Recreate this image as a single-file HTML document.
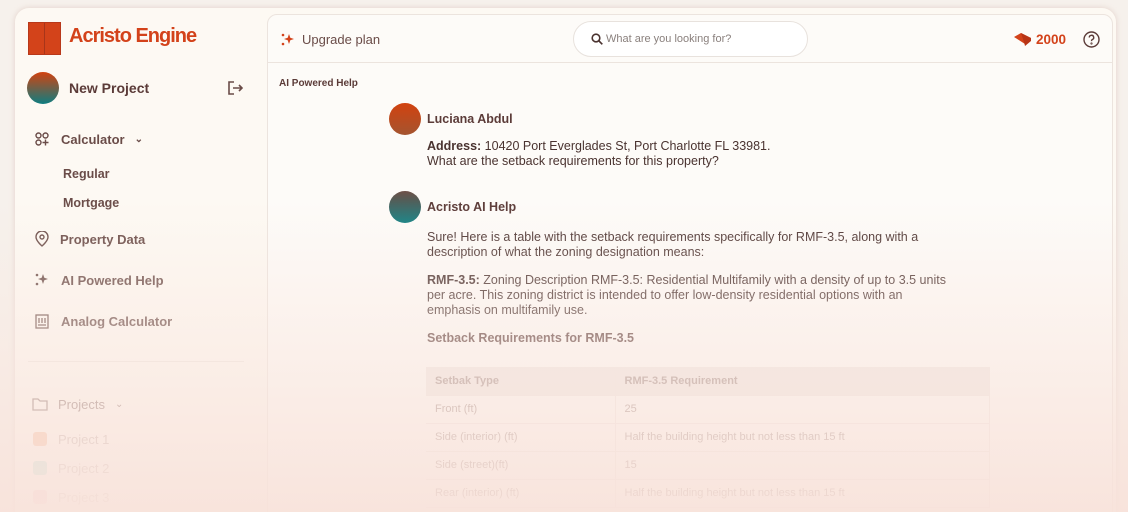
<!DOCTYPE html><html><head><style>
*{margin:0;padding:0;box-sizing:border-box}
html,body{width:1128px;height:512px;overflow:hidden}
body{background:#f6f1ec;font-family:"Liberation Sans",sans-serif;color:#5b3b38;position:relative}
.card{position:absolute;left:15px;top:8px;width:1101px;height:520px;background:#fdf9f3;border-radius:14px;box-shadow:0 0 6px rgba(200,160,150,.4)}
.side{position:absolute;left:0;top:0;width:252px;height:100%}
.main{position:absolute;left:252px;top:6px;width:846px;height:520px;background:#fdfbf8;border:1px solid #ece4de;border-radius:10px}
.abs{position:absolute}
.nav{position:absolute;font-size:13px;font-weight:bold;color:#6a4c48;display:flex;align-items:center}
.fade{position:absolute;left:0;top:0;width:1128px;height:512px;pointer-events:none;background:linear-gradient(to bottom,rgba(250,232,224,0) 0px,rgba(250,232,224,0) 200px,rgba(249,230,222,.55) 360px,rgba(248,226,218,.92) 512px)}
td{height:28px;border-bottom:1px solid #efe6e2;border-right:1px solid #efe6e2;padding-left:9px;font-size:11px;color:#a08a85}
table{border-collapse:collapse;position:absolute;left:426px;top:367px;width:564px}
.msg{position:absolute;left:427px;font-size:12.5px;line-height:15px;color:#4a3330}
</style></head><body>
<div class="card">
<div class="side">
 <div class="abs" style="left:13px;top:14px;width:33px;height:33px;background:#d3431a;border:1px solid #b8381a">
  <div class="abs" style="left:15px;top:0;width:1px;height:31px;background:#a8351a"></div></div>
 <div class="abs" style="left:54px;top:17px;font-size:20px;font-weight:bold;color:#d3421a;letter-spacing:-1px">Acristo Engine</div>
 <div class="abs" style="left:12px;top:64px;width:32px;height:32px;border-radius:50%;background:linear-gradient(#d2420f,#0e7d80)"></div>
 <div class="abs" style="left:54px;top:80px;font-size:14px;font-weight:bold;color:#5b3b38;transform:translateY(-50%)">New Project</div>
 <svg class="abs" style="left:211px;top:72px" width="17" height="16" viewBox="0 0 17 16" fill="none" stroke="#6a4c48" stroke-width="1.6"><path d="M8 2H3v12h5M7 8h9M13 5l3 3-3 3"/></svg>
 <svg class="abs" style="left:20px;top:124px" width="14" height="14" viewBox="0 0 14 14" fill="none" stroke="#6a4c48" stroke-width="1.4"><circle cx="3.5" cy="3.5" r="2.5"/><circle cx="10.5" cy="3.5" r="2.5"/><circle cx="3.5" cy="10.5" r="2.5"/><path d="M10.5 7.5v6M7.5 10.5h6"/></svg>
 <div class="nav" style="left:46px;top:124px">Calculator <span style="margin-left:10px;font-size:10px">&#8964;</span></div>
 <div class="nav" style="left:48px;top:159px;font-size:12.5px">Regular</div>
 <div class="nav" style="left:48px;top:188px;font-size:12.5px">Mortgage</div>
 <svg class="abs" style="left:20px;top:223px" width="14" height="16" viewBox="0 0 14 16" fill="none" stroke="#6a4c48" stroke-width="1.4"><path d="M7 15s6-5 6-9A6 6 0 0 0 1 6c0 4 6 9 6 9z"/><circle cx="7" cy="6" r="2"/></svg>
 <div class="nav" style="left:45px;top:224px">Property Data</div>
 <svg class="abs" style="left:19px;top:264px" width="16" height="16" viewBox="0 0 16 16" fill="#6a4c48"><path d="M9 2l1.3 3.7L14 7l-3.7 1.3L9 12 7.7 8.3 4 7l3.7-1.3z"/><circle cx="3" cy="3" r="1.3"/><circle cx="3" cy="12" r="1.3"/></svg>
 <div class="nav" style="left:46px;top:265px">AI Powered Help</div>
 <svg class="abs" style="left:20px;top:306px" width="14" height="15" viewBox="0 0 14 15" fill="none" stroke="#6a4c48" stroke-width="1.3"><rect x="1" y="1" width="12" height="13"/><path d="M4 4v5M7 4v5M10 4v5M3 11h8"/></svg>
 <div class="nav" style="left:46px;top:306px">Analog Calculator</div>
 <div class="abs" style="left:13px;top:353px;width:216px;height:1px;background:#efe6e0"></div>
 <svg class="abs" style="left:17px;top:389px" width="16" height="14" viewBox="0 0 16 14" fill="none" stroke="#8a716c" stroke-width="1.3"><path d="M1 2h5l2 2h7v9H1z"/></svg>
 <div class="nav" style="left:43px;top:389px;color:#8a716c;font-weight:normal">Projects <span style="margin-left:10px;font-size:10px">&#8964;</span></div>
 <div class="abs" style="left:18px;top:424px;width:14px;height:14px;border-radius:3px;background:#f6bfa0"></div>
 <div class="nav" style="left:43px;top:424px;font-weight:normal;color:#c4b1ac">Project 1</div>
 <div class="abs" style="left:18px;top:453px;width:14px;height:14px;border-radius:3px;background:#bfe3da"></div>
 <div class="nav" style="left:43px;top:453px;font-weight:normal;color:#cbbab5">Project 2</div>
 <div class="abs" style="left:18px;top:482px;width:14px;height:14px;border-radius:3px;background:#f7d3d3"></div>
 <div class="nav" style="left:43px;top:482px;font-weight:normal;color:#d8c8c3">Project 3</div>
</div>
</div>
<div class="main" style="left:267px;top:14px">
 <div class="abs" style="left:0;top:0;width:100%;height:48px;border-bottom:1px solid #ece4de"></div>
 <svg class="abs" style="left:12px;top:17px" width="16" height="16" viewBox="0 0 16 16" fill="#d3421a"><path d="M9 2l1.3 3.7L14 7l-3.7 1.3L9 12 7.7 8.3 4 7l3.7-1.3z"/><circle cx="3" cy="3" r="1.3"/><circle cx="3" cy="12" r="1.3"/></svg>
 <div class="abs" style="left:34px;top:17px;font-size:13px;color:#6a4c48">Upgrade plan</div>
 <div class="abs" style="left:305px;top:6px;width:235px;height:36px;border:1px solid #e8e2dd;border-radius:18px;background:#fff"></div>
 <svg class="abs" style="left:323px;top:18px" width="12" height="12" viewBox="0 0 12 12" fill="none" stroke="#4a3330" stroke-width="1.6"><circle cx="5" cy="5" r="3.8"/><path d="M8 8l3.3 3.3"/></svg>
 <div class="abs" style="left:338px;top:18px;font-size:11px;color:#8a807d">What are you looking for?</div>
 <svg class="abs" style="left:745px;top:16px" width="20" height="16" viewBox="0 0 20 16"><path d="M1 6l7-4 10 5-6 6z" fill="#d3421a"/><path d="M8 2l10 5v3l-6 5-1-4z" fill="#b83416"/></svg>
 <div class="abs" style="left:768px;top:17px;font-size:13.5px;font-weight:bold;color:#d3421a">2000</div>
 <svg class="abs" style="left:815px;top:16px" width="17" height="17" viewBox="0 0 17 17" fill="none" stroke="#5b3b38" stroke-width="1.4"><circle cx="8.5" cy="8.5" r="7.5"/><path d="M6.3 6.5a2.2 2.2 0 1 1 3 2c-.8.4-.8.9-.8 1.6"/><circle cx="8.5" cy="12.5" r=".4"/></svg>
 <div class="abs" style="left:11px;top:63px;font-size:10px;font-weight:bold;color:#5b3b38">AI Powered Help</div>
</div>
<div class="abs" style="left:389px;top:103px;width:32px;height:32px;border-radius:50%;background:linear-gradient(#d2420f,#a4542f)"></div>
<div class="abs" style="left:427px;top:112px;font-size:12.5px;font-weight:bold;color:#5b3b38">Luciana Abdul</div>
<div class="msg" style="top:139px"><b>Address:</b> 10420 Port Everglades St, Port Charlotte FL 33981.<br>What are the setback requirements for this property?</div>
<div class="abs" style="left:389px;top:191px;width:32px;height:32px;border-radius:50%;background:linear-gradient(#6e5048,#0e7d80)"></div>
<div class="abs" style="left:427px;top:200px;font-size:12.5px;font-weight:bold;color:#5b3b38">Acristo AI Help</div>
<div class="msg" style="top:230px">Sure! Here is a table with the setback requirements specifically for RMF-3.5, along with a<br>description of what the zoning designation means:</div>
<div class="msg" style="top:273px"><b>RMF-3.5:</b> Zoning Description RMF-3.5: Residential Multifamily with a density of up to 3.5 units<br>per acre. This zoning district is intended to offer low-density residential options with an<br>emphasis on multifamily use.</div>
<div class="msg" style="top:331px;font-weight:bold;color:#5b3b38">Setback Requirements for RMF-3.5</div>
<table>
<tr style="background:#efe7e3"><td style="width:189px;font-weight:bold">Setbak Type</td><td style="font-weight:bold">RMF-3.5 Requirement</td></tr>
<tr><td>Front (ft)</td><td>25</td></tr>
<tr><td>Side (interior) (ft)</td><td>Half the building height but not less than 15 ft</td></tr>
<tr><td>Side (street)(ft)</td><td>15</td></tr>
<tr><td>Rear (interior) (ft)</td><td>Half the building height but not less than 15 ft</td></tr>
</table>
<div class="fade"></div>
</body></html>
